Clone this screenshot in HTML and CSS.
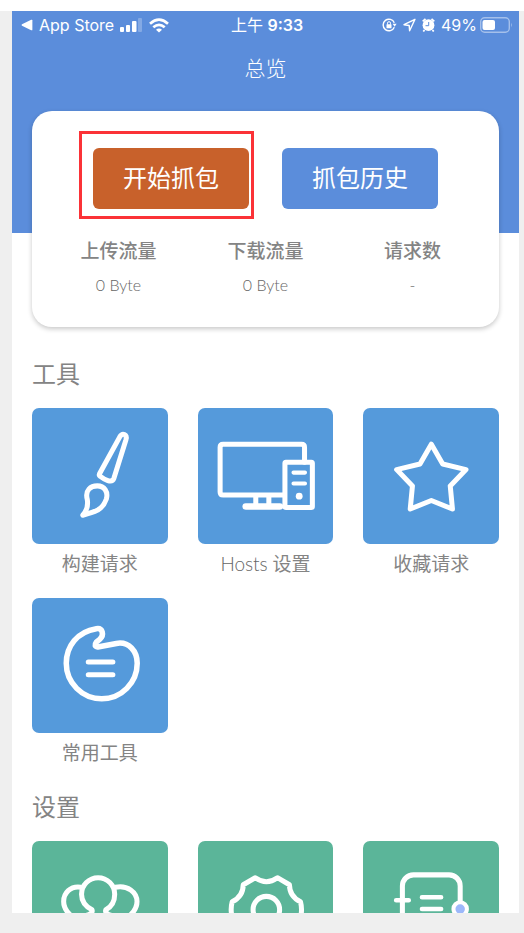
FILE: index.html
```
<!DOCTYPE html>
<html lang="zh-CN">
<head>
<meta charset="utf-8">
<meta name="viewport" content="width=device-width, initial-scale=1">
<title>总览</title>
<link rel="stylesheet" href="styles.css">
</head>
<body>
<div class="phone">
  <header class="header">
    <div class="status">
      <div class="status-left">
        <svg width="12" height="12" viewBox="0 0 12 12" aria-hidden="true"><path d="M1 5.200 10.200.8Q11.400.4 11.400 1.600v8.800q0 1.200-1.200.8L1 6.800Q0 6 1 5.200z" fill="#fff"/></svg>
        <span class="back">App Store</span>
        <svg width="23" height="15" viewBox="0 0 23 15" aria-hidden="true" fill="#fff"><rect x="0" y="9" width="4" height="5" rx="1"/><rect x="6" y="7" width="4" height="7" rx="1"/><rect x="12" y="3" width="4.500" height="11" rx="1"/><rect x="18" y="0" width="4" height="14" rx="1" opacity=".25"/></svg>
        <svg width="20" height="15" viewBox="0 0 20 15" aria-hidden="true" fill="none" stroke="#fff" stroke-width="2.700"><path d="M1 5.700Q10-2.300 19 5.700"/><path d="M4.300 9.300Q10 4.300 15.700 9.300"/><path d="M7 11.700Q10 9.300 13 11.700L10 14.600z" fill="#fff" stroke="none"/></svg>
      </div>
      <div class="clock">上午 <b>9:33</b></div>
      <div class="status-right">
        <svg width="15" height="14" viewBox="0 0 15 14" aria-hidden="true" fill="none" stroke="#fff" stroke-width="1.400"><path d="M12.300 9.200A5.800 5.800 0 1 1 12.300 4.800"/><path d="M10.600 5.700h4l-2 3z" fill="#fff" stroke="none"/><rect x="4.500" y="6.300" width="5" height="4" rx=".5" fill="#fff" stroke="none"/><path d="M5.500 6.500V5.200a1.500 1.500 0 0 1 3 0v1.300" stroke-width="1"/></svg>
        <svg width="13" height="14" viewBox="0 0 13 14" aria-hidden="true" fill="none" stroke="#fff" stroke-width="1.400" stroke-linejoin="round"><path d="M12 1.300 1 6.700l5.200.8.400 5.300z"/></svg>
        <svg width="13" height="14" viewBox="0 0 13 14" aria-hidden="true"><circle cx="6.500" cy="7.200" r="5.900" fill="#fff"/><path d="M.7 3.300 3.500.8M12.300 3.300 9.500.8M2.500 12 1.300 13.500M10.500 12l1.200 1.500" stroke="#fff" stroke-width="1.800"/><path d="M6.700 4v3.700H3.500" fill="none" stroke="#5b8ddb" stroke-width="1"/></svg>
        <span>49%</span>
        <svg class="battery" width="33" height="16" viewBox="0 0 33 16" aria-hidden="true"><rect x=".7" y=".7" width="28.600" height="14.600" rx="4" fill="none" stroke="#fff" stroke-opacity=".45" stroke-width="1.400"/><rect x="2.500" y="3" width="12.500" height="10" rx="2" fill="#fff"/><path d="M31 5.500q1.500 2.500 0 5z" fill="#fff" opacity=".5"/></svg>
      </div>
    </div>
    <h1 class="title">总览</h1>
  </header>

  <main class="content">
    <section class="card">
      <div class="actions">
        <div class="marked">
          <button class="btn btn-start" type="button">开始抓包</button>
        </div>
        <button class="btn" type="button">抓包历史</button>
      </div>
      <dl class="stats">
        <div><dt>上传流量</dt><dd>0 Byte</dd></div>
        <div><dt>下载流量</dt><dd>0 Byte</dd></div>
        <div><dt>请求数</dt><dd>-</dd></div>
      </dl>
    </section>

    <section class="group">
      <h2>工具</h2>
      <div class="grid">
        <a class="item" href="#build">
          <span class="tile"><svg viewBox="0 0 135 135" aria-hidden="true"><path d="M67.200 65.500 87.500 28.500C90 24.500 95 26 93.500 31.500L81.500 70Q80 73.800 75.500 72.200Q71 70.500 68 68Q66.500 67 67.200 65.500z"/><path d="M50.500 106.700Q56.500 100 55 91C52.500 81.500 58.500 77.500 65 77.500C72 77.500 76 83.500 74 90.500Q71.500 98 65.500 101.500Q60 104.200 50.500 106.700z"/></svg></span>
          <span class="name">构建请求</span>
        </a>
        <a class="item" href="#hosts">
          <span class="tile"><svg viewBox="0 0 135 135" aria-hidden="true"><path d="M86 86.500H25Q22 86.500 22 83.500V39Q22 36 25 36H103Q106 36 106 39V54"/><rect x="86.500" y="54" width="27.300" height="45" rx="1"/><path d="M95 64.300h11.500M95 75.200h11.500" stroke-width="4"/><circle class="solid" cx="100.700" cy="87.700" r="3.400"/><path d="M57.500 87v9M70.500 87v9"/><path d="M47.500 98H81.500" stroke-width="6.500"/></svg></span>
          <span class="name"><span class="latin">Hosts</span> 设置</span>
        </a>
        <a class="item" href="#favorites">
          <span class="tile"><svg viewBox="0 0 135 135" aria-hidden="true"><path d="M68 36 79.300 55.700 102.500 61.300 86.800 77.500 89 100.500 68 92 47 100.500 49.200 77.500 33.500 61.300 56.700 55.700z"/></svg></span>
          <span class="name">收藏请求</span>
        </a>
        <a class="item" href="#common">
          <span class="tile"><svg viewBox="0 0 135 135" aria-hidden="true"><path d="M64 30.500C70.500 29.500 72 37 67.500 41L64 44Q61 48 65.500 48.700L84 45.200C96.500 43 104.700 53 104.700 65A35.300 35.300 0 0 1 34.100 65C34.100 48 45 33.500 64 30.500z" stroke-width="5.500"/><path d="M56 63.700H80.500M56 76.300H80.500"/></svg></span>
          <span class="name">常用工具</span>
        </a>
      </div>
    </section>

    <section class="group">
      <h2>设置</h2>
      <div class="grid">
        <a class="item" href="#community" aria-label="社区">
          <span class="tile green"><svg viewBox="0 0 135 135" aria-hidden="true"><path d="M48.500 46C38 44.500 31.500 52 31.500 60.300Q31.500 67.500 37.500 73"/><path d="M83 46C95 43.500 104.500 51 104.500 60.300Q104.500 67.500 98.500 73"/><path d="M54 74Q61 72 59.700 68.500C53 65 49.300 59.500 49.300 53A16.500 16.500 0 0 1 82.300 53C82.300 59.500 80 65 73.500 68.500Q72 72 79 74"/></svg></span>
        </a>
        <a class="item" href="#settings" aria-label="设置">
          <span class="tile green"><svg viewBox="0 0 135 135" aria-hidden="true"><circle cx="68" cy="68.300" r="13.200"/><path d="M57 36.500Q68 44.500 79 36.500L91 43.500Q91 55 102 60.500Q104 68 102 76Q91 82 91 93L79 100Q68 92 57 100L45 93Q45 82 34 76Q32 68 34 60.500Q45 55 45 43.500z"/></svg></span>
        </a>
        <a class="item" href="#script" aria-label="脚本">
          <span class="tile green"><svg viewBox="0 0 135 135" aria-hidden="true"><rect x="39.200" y="33.700" width="57.500" height="68" rx="11"/><path d="M33 59H45.500M58.700 56H77.700M58.700 67.700H77.700" stroke-width="4.600"/><circle class="knob" cx="96.700" cy="67.700" r="6.700"/></svg></span>
        </a>
      </div>
    </section>
  </main>
</div>
</body>
</html>
```
FILE: styles.css
```
* { box-sizing: border-box; }

body {
  margin: 0;
  height: 100vh;
  padding: 0 5px 20px 12px;
  border-top: 11px solid #fff;
  background: #efefef;
  color: #848484;
  font-family: Lato, "Noto Sans CJK SC", sans-serif;
  font-weight: 400;
}

.phone {
  height: 100%;
  overflow: hidden;
  background: #fff;
}

.header {
  height: 222px;
  background: #5b8ddb;
  color: #fff;
}

.status {
  display: grid;
  grid-template-columns: 1fr auto 1fr;
  align-items: center;
  height: 28px;
  padding: 0 6px 0 9px;
  font-family: Inter, "Noto Sans CJK SC", sans-serif;
  font-size: 16px;
  line-height: 20px;
}

.status svg { flex: none; }

.status-left,
.status-right {
  display: flex;
  align-items: center;
  gap: 6px;
  white-space: nowrap;
}

.status-right { justify-content: flex-end; }
.battery { margin-left: -3px; }
.clock b { font-weight: 600; }

.title {
  margin: 0;
  padding-top: 14px;
  font-size: 21px;
  font-weight: 300;
  line-height: 30px;
  text-align: center;
}

.content {
  margin-top: -122px;
  padding: 0 20px;
}

.card {
  position: relative;
  height: 216px;
  margin-bottom: 7px;
  padding-top: 37px;
  border-radius: 20px;
  background: #fff;
  box-shadow: 0 2px 5px rgba(0, 0, 0, .22);
}

.actions {
  display: flex;
  justify-content: center;
  gap: 33px;
}

.marked { position: relative; }

.marked::after {
  content: "";
  position: absolute;
  inset: -17px -5px -10px -14px;
  border: 3px solid #fb3237;
  pointer-events: none;
}

.btn {
  display: block;
  width: 156px;
  height: 61px;
  padding: 0 0 2px;
  border: 0;
  border-radius: 6px;
  background: #5b8ddb;
  color: #fff;
  font: inherit;
  font-size: 24px;
  line-height: 36px;
}

.btn-start { background: #c8612b; }

.stats {
  display: grid;
  grid-template-columns: repeat(3, 1fr);
  margin: 28px 13px 0;
  text-align: center;
}

.stats dt {
  font-size: 19px;
  font-weight: 500;
  line-height: 28px;
}

.stats dd {
  margin: 8px 0 0;
  font-size: 16px;
  line-height: 24px;
}

.stats dd,
.latin {
  font-weight: 300;
  color: #666;
}

.group { padding-top: 22px; }

.group h2 {
  margin: 0;
  font-size: 24px;
  font-weight: 400;
  line-height: 36px;
}

.grid {
  display: grid;
  grid-template-columns: repeat(3, 1fr);
  gap: 20px 30px;
  margin-top: 16px;
}

.item {
  color: inherit;
  text-align: center;
  text-decoration: none;
}

.tile {
  display: block;
  aspect-ratio: 1;
  border-radius: 7px;
  background: #559adb;
}

.green { background: #5bb599; }

.tile svg {
  display: block;
  width: 100%;
  height: 100%;
  fill: none;
  stroke: #fff;
  stroke-width: 5;
  stroke-linecap: round;
  stroke-linejoin: round;
}

.tile .solid {
  fill: #fff;
  stroke: none;
}

.tile .knob {
  fill: #9cb8fa;
  stroke-width: 4;
}

.name {
  display: block;
  margin-top: 6px;
  font-size: 19px;
  line-height: 28px;
}
```
